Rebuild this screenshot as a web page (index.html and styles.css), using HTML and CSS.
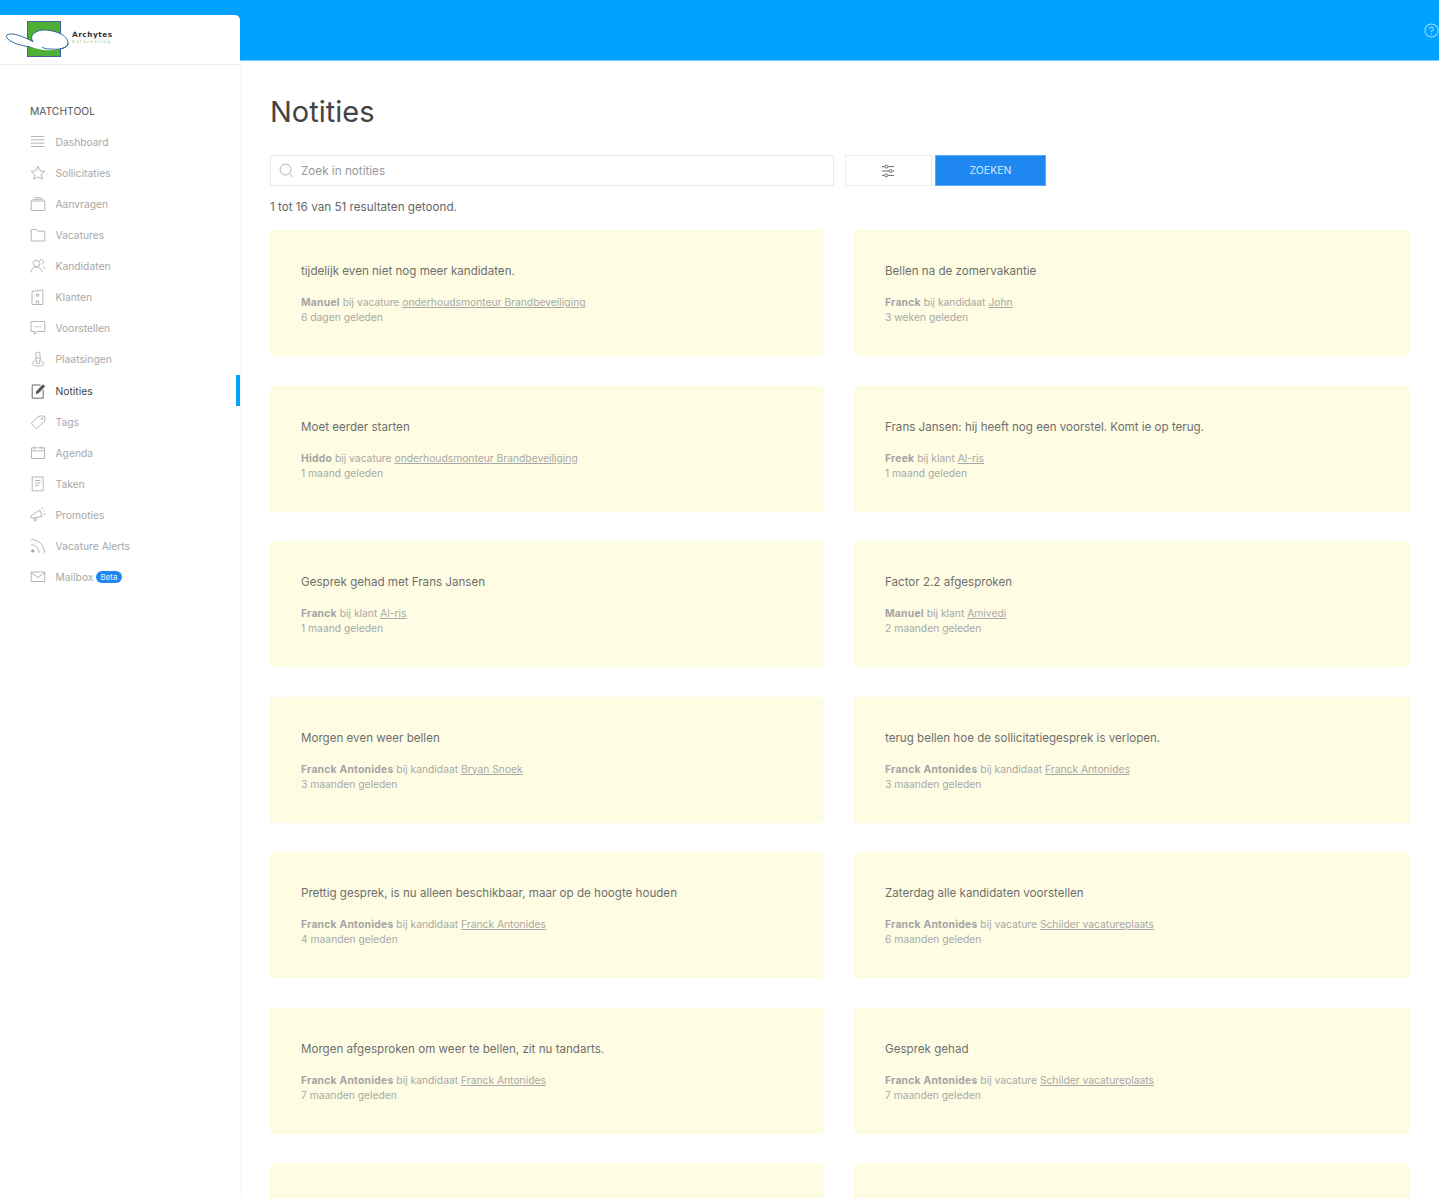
FILE: index.html
```html
<!DOCTYPE html>
<html lang="nl">
<head>
<meta charset="utf-8">
<title>Notities</title>
<link rel="stylesheet" href="styles.css">
</head>
<body>
<div class="app">
  <header class="topbar">
    <svg class="help" viewBox="0 0 16 16" width="15" height="15"><circle cx="8" cy="8" r="7" fill="none" stroke="#9adbff" stroke-width="1.100"/><path d="M6 6.300a2 2 0 1 1 3 1.700c-.7.400-1 .8-1 1.600" fill="none" stroke="#9adbff" stroke-width="1.100"/><circle cx="8" cy="11.600" r=".7" fill="#9adbff"/></svg>
  </header>
  <aside class="sidebar">
    <div class="brand">
      <svg class="logo" viewBox="0 0 70 44" width="70" height="44">
        <rect x="22.500" y="2.500" width="33" height="35" fill="#4fae36" stroke="#3d62a0" stroke-width="1"/>
        <path d="M2 16C6 13 18 17 28 22.700C24 17 29 12 38 11C50 11 63 16 63 24C63 29 55 31 46 30C40 30 37 28 37 28C25 29 8 26 2 19C1 18 1 17 2 16Z" fill="#fff" stroke="#1e5f94" stroke-width=".9"/>
        <path d="M24 27C30 30 44 33 55 30V27H24Z" fill="#fff"/>
        <path d="M37 28C40 30 42 30 46 30C55 31 63 29 63 24" fill="none" stroke="#1e5f94" stroke-width=".9"/>
      </svg>
      <div class="brand-text"><span class="brand-name">Archytes</span><span class="brand-sub">Detachering</span></div>
    </div>
    <nav class="nav">
      <div class="nav-title">MATCHTOOL</div>
      <a class="nav-item"><svg class="ico" viewBox="0 0 16 16"><path d="M1 2.500h13.500M1 5.800h13.500M1 9.200h13.500M1 12.500h13.500"/></svg>Dashboard</a>
      <a class="nav-item"><svg class="ico" viewBox="0 0 16 16"><path d="M8 1.300l2 4.500 4.900.5-3.700 3.200 1.100 4.800L8 11.800l-4.300 2.500 1.100-4.800L1.100 6.300 6 5.800z"/></svg>Sollicitaties</a>
      <a class="nav-item"><svg class="ico" viewBox="0 0 16 16"><path d="M1.200 5h13.600v9.500H1.200zM2.500 3.300h11M4.500 1.700h7"/></svg>Aanvragen</a>
      <a class="nav-item"><svg class="ico" viewBox="0 0 16 16"><path d="M1.200 2.500h5l1.300 1.700h7.300v9.800H1.200z"/></svg>Vacatures</a>
      <a class="nav-item"><svg class="ico" viewBox="0 0 16 16"><circle cx="6.500" cy="5.500" r="3.300"/><path d="M.8 14.500c.5-3.500 2.700-5.500 5.700-5.500s5.200 2 5.700 5.500M10 1.500c2.300-.5 3.500 1 3.500 2.500 0 1.200-.7 2-1.700 2.300M13 8.500c1 .6 1.800 1.500 2.200 2.800"/></svg>Kandidaten</a>
      <a class="nav-item"><svg class="ico" viewBox="0 0 16 16"><path d="M2 2.500L12.800.8v14.700H2zM6.300 5h2.200v2.200H6.300zM6.200 15.500v-3.500h2.400v3.500"/></svg>Klanten</a>
      <a class="nav-item"><svg class="ico" viewBox="0 0 16 16"><path d="M1 1.500h13.800v10H7l-2.500 2.800v-2.800H1z"/><path class="dots" d="M5.300 6.800h1M7.500 6.800h1M9.700 6.800h1"/></svg>Voorstellen</a>
      <a class="nav-item"><svg class="ico" viewBox="0 0 16 16"><path d="M6 7V3a2 2 0 0 1 4 0v4M5.700 7h4.600v2.500H9.300v3H6.700v-3H5.700z"/><path d="M5 10.500c-2 .4-3 1.200-3 2.200 0 1.300 2.700 2.300 6 2.300s6-1 6-2.300c0-1-1-1.800-3-2.200"/></svg>Plaatsingen</a>
      <a class="nav-item active"><svg class="ico" viewBox="0 0 16 16"><path d="M10.500 2H2.200v13.200h11V7"/><path d="M6.300 10.700l.6-2.700 6-6.300 1.800 1.700-6 6.300z" fill="#555"/></svg>Notities<span class="marker"></span></a>
      <a class="nav-item"><svg class="ico" viewBox="0 0 16 16"><path d="M1 9.500L9 2h5.500L15 6.800 6.500 14.800z"/><circle cx="12" cy="4.700" r=".8"/></svg>Tags</a>
      <a class="nav-item"><svg class="ico" viewBox="0 0 16 16"><path d="M1.500 2.800h13v10.700h-13zM1.500 5.800h13M4.500 1.300v3M11.500 1.300v3"/></svg>Agenda</a>
      <a class="nav-item"><svg class="ico" viewBox="0 0 16 16"><path d="M2.200 1h11v13.800h-11zM5 4.500h5.500M5 7h5.500M5 9.500h3.500"/></svg>Taken</a>
      <a class="nav-item"><svg class="ico" viewBox="0 0 16 16"><path d="M.5 9l9.500-6 1.800 6.500-10 1.700zM3.800 11l.7 2.800 1.800-.5-.6-2.800M13 4.500l1.500-1.300M13.500 7.500l2-.5M12 2l.5-1.500"/></svg>Promoties</a>
      <a class="nav-item"><svg class="ico" viewBox="0 0 16 16"><path d="M1.200 6.800c4.400 0 7.800 3.500 7.800 8M1.200 1.500c7.500 0 13.300 6 13.300 13.300"/><circle cx="2.700" cy="13" r="1.200" fill="#999"/></svg>Vacature Alerts</a>
      <a class="nav-item"><svg class="ico" viewBox="0 0 16 16"><path d="M1.200 3h13.500v9.500H1.200zM1.200 3.500L8 8.500l6.700-5"/></svg>Mailbox<span class="badge">Beta</span></a>
    </nav>
  </aside>
  <main class="content">
    <h1 class="page-title">Notities</h1>
    <form class="search">
      <div class="search-field">
        <svg class="search-ico" viewBox="0 0 16 16" width="15" height="15"><circle cx="7" cy="7" r="5.800"/><path d="M11.300 11.300l3.500 3.500"/></svg>
        <span>Zoek in notities</span>
      </div>
      <div class="filter-btn">
        <svg viewBox="0 0 16 16" width="14" height="14" class="filter-ico"><path d="M1 3h3M8 3h7M1 8h8M13 8h2M1 13h3M8 13h7"/><circle cx="6" cy="3" r="1.700"/><circle cx="11" cy="8" r="1.700"/><circle cx="6" cy="13" r="1.700"/></svg>
      </div>
      <div class="submit-btn">ZOEKEN</div>
    </form>
    <p class="count">1 tot 16 van 51 resultaten getoond.</p>
    <section class="cards">
      <article class="card"><p class="note">tijdelijk even niet nog meer kandidaten.</p><p class="meta"><b>Manuel</b> bij vacature <a>onderhoudsmonteur Brandbeveiliging</a></p><p class="meta">6 dagen geleden</p></article>
      <article class="card"><p class="note">Bellen na de zomervakantie</p><p class="meta"><b>Franck</b> bij kandidaat <a>John</a></p><p class="meta">3 weken geleden</p></article>
      <article class="card"><p class="note">Moet eerder starten</p><p class="meta"><b>Hiddo</b> bij vacature <a>onderhoudsmonteur Brandbeveiliging</a></p><p class="meta">1 maand geleden</p></article>
      <article class="card"><p class="note">Frans Jansen: hij heeft nog een voorstel. Komt ie op terug.</p><p class="meta"><b>Freek</b> bij klant <a>Al-ris</a></p><p class="meta">1 maand geleden</p></article>
      <article class="card"><p class="note">Gesprek gehad met Frans Jansen</p><p class="meta"><b>Franck</b> bij klant <a>Al-ris</a></p><p class="meta">1 maand geleden</p></article>
      <article class="card"><p class="note">Factor 2.2 afgesproken</p><p class="meta"><b>Manuel</b> bij klant <a>Amivedi</a></p><p class="meta">2 maanden geleden</p></article>
      <article class="card"><p class="note">Morgen even weer bellen</p><p class="meta"><b>Franck Antonides</b> bij kandidaat <a>Bryan Snoek</a></p><p class="meta">3 maanden geleden</p></article>
      <article class="card"><p class="note">terug bellen hoe de sollicitatiegesprek is verlopen.</p><p class="meta"><b>Franck Antonides</b> bij kandidaat <a>Franck Antonides</a></p><p class="meta">3 maanden geleden</p></article>
      <article class="card"><p class="note">Prettig gesprek, is nu alleen beschikbaar, maar op de hoogte houden</p><p class="meta"><b>Franck Antonides</b> bij kandidaat <a>Franck Antonides</a></p><p class="meta">4 maanden geleden</p></article>
      <article class="card"><p class="note">Zaterdag alle kandidaten voorstellen</p><p class="meta"><b>Franck Antonides</b> bij vacature <a>Schilder vacatureplaats</a></p><p class="meta">6 maanden geleden</p></article>
      <article class="card"><p class="note">Morgen afgesproken om weer te bellen, zit nu tandarts.</p><p class="meta"><b>Franck Antonides</b> bij kandidaat <a>Franck Antonides</a></p><p class="meta">7 maanden geleden</p></article>
      <article class="card"><p class="note">Gesprek gehad</p><p class="meta"><b>Franck Antonides</b> bij vacature <a>Schilder vacatureplaats</a></p><p class="meta">7 maanden geleden</p></article>
      <article class="card"></article>
      <article class="card"></article>
    </section>
  </main>
</div>
</body>
</html>
```

FILE: styles.css
```css
* { box-sizing: border-box; }
html, body { margin: 0; height: 1198px; overflow: hidden; background: #fff; }
body { font-family: Inter, "Liberation Sans", sans-serif; color: #666; }
p, h1 { margin: 0; }

.app {
  display: grid;
  grid-template-columns: 240px 1fr;
  grid-template-rows: 61px 1fr;
  height: 1198px;
}
.topbar {
  grid-column: 1 / -1;
  grid-row: 1;
  background: #00a2ff;
  border-bottom: 1px solid #7fd0ff;
  display: flex;
  align-items: center;
  justify-content: flex-end;
}
.help { margin-right: 0; }

.sidebar {
  grid-column: 1;
  grid-row: 1 / 3;
  margin-top: 15px;
  background: #fff;
  border-top-right-radius: 5px;
  box-shadow: 1px 0 3px rgba(0,0,0,.04);
  z-index: 1;
}
.brand {
  height: 50px;
  border-bottom: 1px solid #ececec;
  display: flex;
  align-items: flex-start;
  padding: 5px 0 0 5px;
}
.logo { flex: none; margin-top: -1px; }
.brand-text { display: flex; flex-direction: column; margin: 10px 0 0 -3px; }
.brand-name { font: 700 7.300px/10px "DejaVu Sans", sans-serif; color: #333; letter-spacing: .55px; }
.brand-sub { font: 4px/4px "DejaVu Sans", sans-serif; color: #8bc76f; letter-spacing: 1.350px; }

.nav { padding-top: 36px; }
.nav-title { font-size: 10.300px; line-height: 20px; color: #555; padding-left: 30px; margin-bottom: 5.500px; }
.nav-item {
  position: relative;
  height: 31.070px;
  display: flex;
  align-items: center;
  padding-left: 30px;
  font-size: 10.300px;
  color: #a8a8a8;
}
.nav-item.active { color: #444; }
.ico {
  width: 16px;
  height: 16px;
  margin-right: 9.500px;
  flex: none;
  fill: none;
  stroke: #a5a5a5;
  stroke-width: .8;
}
.dots { stroke-width: 1; stroke: #888; }
.active .ico { stroke: #444; }
.marker { position: absolute; right: 0; top: 0; bottom: 0; width: 4px; background: #00a2ff; }
.badge {
  margin-left: 3px;
  background: #1e88f0;
  color: #e6f2ff;
  border-radius: 7px;
  font-size: 8px;
  line-height: 12px;
  padding: 0 4px;
}

.content { grid-column: 2; grid-row: 2; padding: 0 29px 0 30px; overflow: hidden; }
.page-title { font-size: 29px; font-weight: 400; line-height: 41px; color: #444; margin-top: 30px; }
.search { display: flex; margin-top: 23px; height: 31px; }
.search-field {
  width: 564px;
  border: 1px solid #e8e8e8;
  display: flex;
  align-items: center;
  padding-left: 8px;
  font-size: 11.700px;
  color: #999;
}
.search-ico { fill: none; stroke: #aaa; stroke-width: 1; margin-right: 7px; }
.filter-btn {
  width: 87px;
  margin-left: 11px;
  border: 1px solid #ececec;
  display: flex;
  align-items: center;
  justify-content: center;
  padding-right: 2px;
}
.filter-ico { fill: none; stroke: #555; stroke-width: 1; }
.submit-btn {
  width: 111px;
  margin-left: 3px;
  background: #1e88f0;
  border: 1px solid #5aa9f5;
  color: #cfe6ff;
  font-size: 10.500px;
  display: flex;
  align-items: center;
  justify-content: center;
}
.count { font-size: 11.700px; line-height: 20px; color: #666; margin-top: 11px; }

.cards {
  display: grid;
  grid-template-columns: 554px 556px;
  column-gap: 30px;
  row-gap: 29.500px;
  margin-top: 13px;
}
.card {
  height: 126px;
  background: #fefde3;
  border: 1px solid #fdfcdb;
  border-radius: 4px;
  padding: 31px 30px 0;
}
.note { font-size: 11.600px; line-height: 18px; color: #6f6f6f; margin-bottom: 15px; }
.meta { font-size: 10.300px; line-height: 15px; color: #a8a8a8; }
.meta b { font-weight: 700; color: #a4a4a4; letter-spacing: .25px; }
.meta a { text-decoration: underline; }
```
